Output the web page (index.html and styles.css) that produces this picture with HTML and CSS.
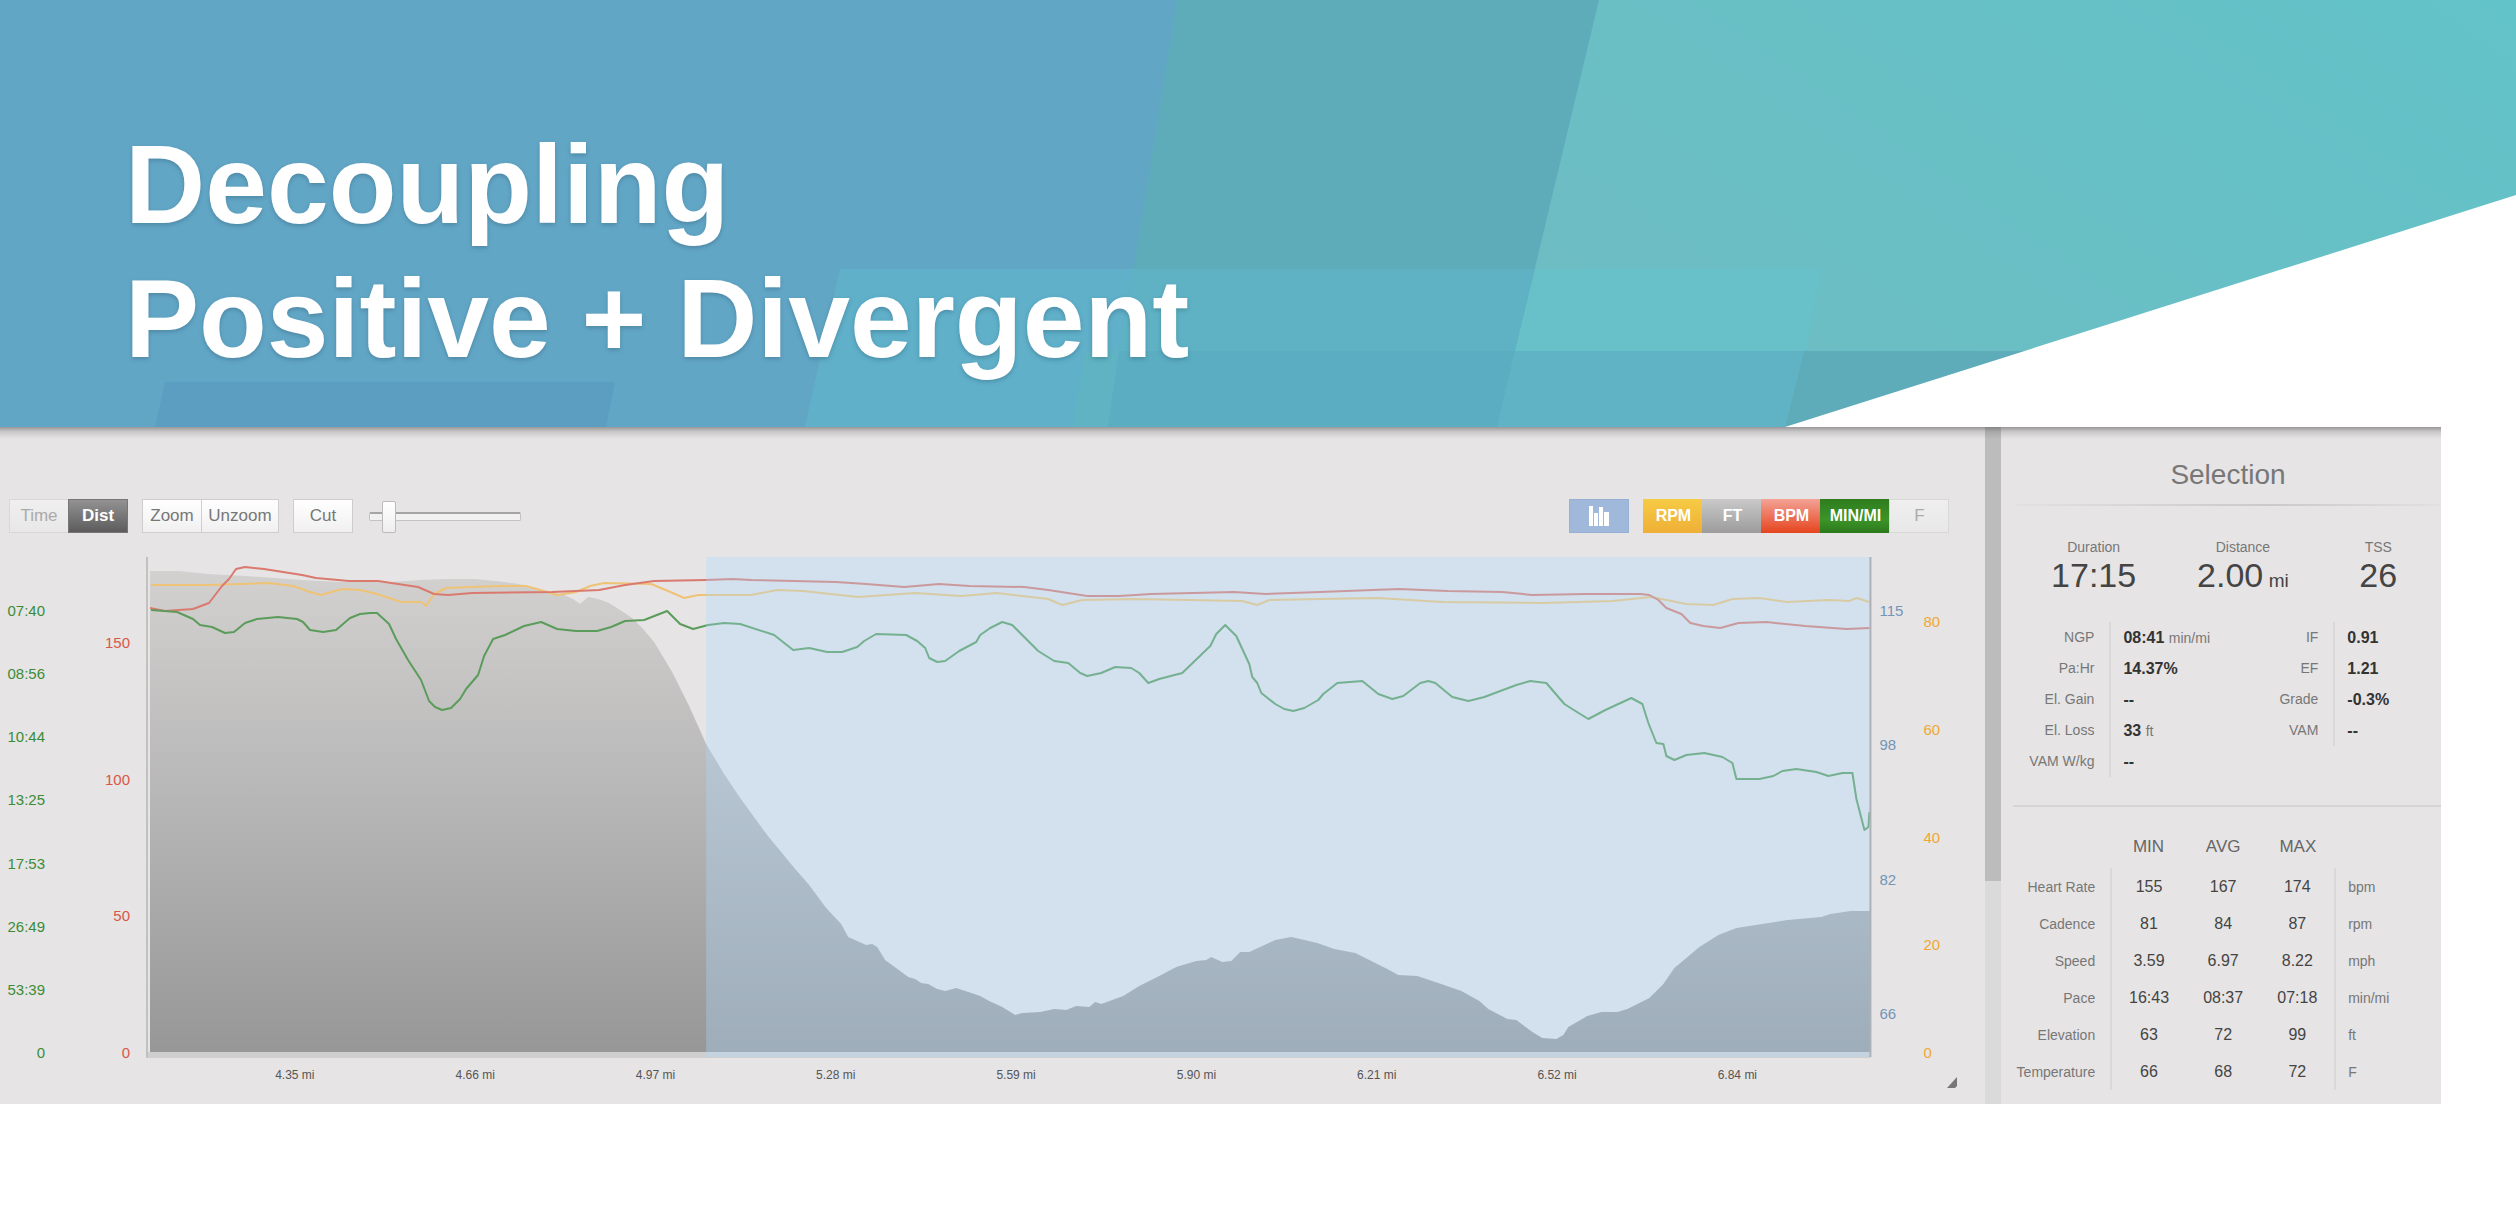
FILE: index.html
```html
<!DOCTYPE html>
<html lang="en">
<head>
<meta charset="utf-8">
<title>Decoupling: Positive + Divergent</title>
<link rel="stylesheet" href="styles.css">
</head>
<body>
<header class="banner">
  <svg class="banner-art" viewBox="0 0 2516 427" preserveAspectRatio="none" aria-hidden="true">
    <defs>
      <linearGradient id="teal" x1="0" y1="0.6" x2="1" y2="0">
        <stop offset="0" stop-color="#6dbdc3"/>
        <stop offset="1" stop-color="#62c3c8"/>
      </linearGradient>
    </defs>
    <rect width="2516" height="427" fill="#62a6c6"/>
    <path d="M165 382H615L606 427H155Z" fill="#5c9ec1"/>
    <path d="M1177 0H1599L1497 427H1108Z" fill="#5eacba"/>
    <path d="M1599 0H2516V427H1497Z" fill="url(#teal)"/>
    <path d="M840 269H1132L1108 427H805Z" fill="#60b0ca"/>
    <path d="M1085 351H1119L1108 427H1072Z" fill="#5fb3c2"/>
    <path d="M1132 269H1535L1515 351H1119Z" fill="#5fb2c4"/>
    <path d="M1119 351H1515L1497 427H1108Z" fill="#5badc2"/>
    <path d="M1535 269H1822L1806 351H1515Z" fill="#68c0c9"/>
    <path d="M1515 351H1804L1785 427H1497Z" fill="#60b3c4"/>
    <path d="M1804 351H2030V427H1785Z" fill="#5eabb9"/>
    <path d="M2516 195V427H1785Z" fill="#fff"/>
  </svg>
  <h1 class="title">Decoupling<br>Positive + Divergent</h1>
</header>

<main class="panel">
  <section class="chart">
    <div class="toolbar">
      <div class="group">
        <button class="btn faded" type="button">Time</button>
        <button class="btn active" type="button">Dist</button>
      </div>
      <div class="group">
        <button class="btn" type="button">Zoom</button>
        <button class="btn wide" type="button">Unzoom</button>
      </div>
      <button class="btn" type="button">Cut</button>
      <input class="slider" type="range" min="0" max="100" value="9" aria-label="Smoothing">
      <button class="btn bars" type="button" aria-label="Histogram">
        <svg width="22" height="20" viewBox="0 0 22 20" aria-hidden="true"><path d="M1 0h4v20H1zM6 7h4v13H6zM11 1h4v19h-4zM16 6h5v14h-5z" fill="#fff"/></svg>
      </button>
      <div class="group">
        <button class="btn tone rpm" type="button">RPM</button>
        <button class="btn tone ft" type="button">FT</button>
        <button class="btn tone bpm" type="button">BPM</button>
        <button class="btn tone pace" type="button">MIN/MI</button>
        <button class="btn faded" type="button">F</button>
      </div>
    </div>

    <div class="graph">
      <div class="axis axis-pace"><span>07:40</span><span>08:56</span><span>10:44</span><span>13:25</span><span>17:53</span><span>26:49</span><span>53:39</span><span>0</span></div>
      <div class="axis axis-bpm"><span>150</span><span>100</span><span>50</span><span>0</span></div>
      <svg class="plot" viewBox="146 556 1726 502" preserveAspectRatio="none" role="img" aria-label="Pace, heart rate, cadence and elevation by distance">
        <defs>
          <linearGradient id="ground" gradientUnits="userSpaceOnUse" x1="0" y1="571" x2="0" y2="1052">
            <stop offset="0" stop-color="#d2d1d0"/>
            <stop offset="0.5" stop-color="#b6b5b5"/>
            <stop offset="1" stop-color="#989797"/>
          </linearGradient>
        </defs>
        <path d="M146 1052H1870V1058H146Z" fill="#d0cfcf"/>
        <path d="M147 557V1058" stroke="#c2c1c1" stroke-width="2"/>
        <path fill="url(#ground)" d="M150 1052V571L179 571 208 574 245 576 274 578 302 580 340 582 392 582 420 580 448 579 475 579 496 581 519 584 543 590 564 595 573 599 580 604 588 597 598 599 609 603 620 610 632 618 643 629 654 642 672 672 689 706 706 744 724 774 740 798 767 835 795 869 809 885 826 908 841 924 848 937 866 945 872 944 877 947 885 960 908 977 915 979 921 983 928 984 937 989 945 991 956 988 980 996 989 1001 1002 1007 1015 1015 1022 1013 1040 1012 1054 1009 1066 1010 1076 1006 1089 1007 1095 1002 1101 1004 1123 996 1139 986 1159 976 1176 967 1196 961 1206 960 1211 957 1222 962 1231 961 1240 952 1249 952 1275 940 1291 937 1300 939 1317 943 1334 949 1355 953 1385 968 1398 975 1417 976 1438 983 1461 991 1479 1001 1488 1009 1507 1019 1516 1020 1532 1032 1542 1038 1556 1039 1563 1035 1568 1027 1587 1016 1601 1012 1617 1012 1627 1009 1649 998 1663 984 1674 968 1699 947 1718 935 1736 928 1787 920 1821 917 1830 914 1850 911 1870 911V1052Z"/>
        <g class="series">
          <polyline stroke="#efc376" points="151,585 208,585 269,583 293,586 310,592 321,595 342,589 360,590 377,594 401,602 421,602 426,606 434,594 446,588 472,587 500,586 526,586 540,590 557,595 576,592 590,586 604,583 651,584 668,591 684,598 698,595 751,595 777,590 803,591 858,597 915,593 961,596 997,593 1048,599 1062,605 1082,600 1135,599 1242,601 1257,605 1269,600 1320,599 1378,598 1442,602 1543,603 1612,601 1651,597 1686,604 1713,605 1732,599 1759,598 1787,602 1828,600 1849,601 1856,598 1869,602"/>
          <polyline stroke="#da7a6e" points="150,608 165,611 193,609 209,603 222,586 229,579 236,569 245,567 264,569 302,575 316,578 349,581 378,581 418,587 434,594 448,595 472,593 552,592 599,590 625,585 654,581 706,580 732,579 751,580 836,582 866,584 904,587 939,584 969,586 1024,587 1048,590 1087,596 1119,596 1151,594 1234,592 1265,594 1320,592 1346,591 1399,589 1447,591 1502,592 1532,595 1585,594 1640,594 1649,595 1658,600 1666,608 1681,614 1690,623 1703,626 1720,628 1738,623 1766,622 1805,626 1846,629 1869,628"/>
          <polyline stroke="#5b9c5b" points="151,610 177,612 193,619 200,625 212,627 225,633 234,632 245,623 257,619 278,617 297,619 303,622 310,630 323,632 336,630 350,618 360,614 370,613 377,613 389,624 396,639 408,660 421,680 429,701 435,707 442,710 451,708 460,699 466,689 478,675 484,656 493,639 505,635 524,626 541,622 557,629 576,631 597,631 611,627 625,621 644,620 667,611 680,624 693,629 708,625 724,623 740,624 774,635 793,650 809,648 827,652 842,652 857,647 864,641 876,634 906,635 917,641 925,648 929,658 937,662 945,661 959,651 976,642 980,635 990,628 1002,622 1012,625 1038,651 1054,661 1068,663 1080,673 1087,676 1101,673 1115,667 1131,668 1139,673 1148,683 1159,679 1182,673 1210,646 1216,634 1225,625 1236,636 1249,664 1252,677 1257,683 1261,693 1275,704 1284,709 1293,711 1304,708 1318,700 1323,694 1337,683 1362,681 1378,694 1392,699 1403,696 1420,683 1428,681 1435,683 1452,697 1468,701 1484,697 1516,685 1530,681 1546,683 1564,704 1575,711 1588,719 1605,710 1631,698 1642,704 1648,723 1656,743 1663,744 1666,756 1674,760 1686,755 1704,753 1722,757 1732,763 1736,779 1759,779 1773,776 1782,771 1796,769 1816,772 1828,776 1842,773 1852,773 1856,799 1864,830 1868,827 1869,812"/>
        </g>
        <rect x="706" y="557" width="1164" height="500" fill="#aadaff" fill-opacity="0.33"/>
        <path d="M1870 557V1057" stroke="#adb1b7" stroke-width="2"/>
      </svg>
      <div class="axis axis-elev"><span>115</span><span>98</span><span>82</span><span>66</span></div>
      <div class="axis axis-cad"><span>80</span><span>60</span><span>40</span><span>20</span><span>0</span></div>
      <div class="axis-dist"><span>4.35 mi</span><span>4.66 mi</span><span>4.97 mi</span><span>5.28 mi</span><span>5.59 mi</span><span>5.90 mi</span><span>6.21 mi</span><span>6.52 mi</span><span>6.84 mi</span></div>
      <svg class="grip" width="11" height="12" viewBox="0 0 11 12" aria-hidden="true"><path d="M0 11L10 0V9L8 11Z" fill="#777"/></svg>
    </div>
  </section>

  <div class="scrollbar"><div class="thumb"></div></div>

  <aside class="side">
    <h2 class="side-title">Selection</h2>
    <dl class="totals">
      <div><dt>Duration</dt><dd>17:15</dd></div>
      <div><dt>Distance</dt><dd>2.00 <small>mi</small></dd></div>
      <div><dt>TSS</dt><dd>26</dd></div>
    </dl>
    <div class="details">
      <dl class="facts">
        <dt>NGP</dt><dd>08:41 <small>min/mi</small></dd>
        <dt>Pa:Hr</dt><dd>14.37%</dd>
        <dt>El. Gain</dt><dd>--</dd>
        <dt>El. Loss</dt><dd>33 <small>ft</small></dd>
        <dt>VAM W/kg</dt><dd>--</dd>
      </dl>
      <dl class="facts">
        <dt>IF</dt><dd>0.91</dd>
        <dt>EF</dt><dd>1.21</dd>
        <dt>Grade</dt><dd>-0.3%</dd>
        <dt>VAM</dt><dd>--</dd>
      </dl>
    </div>
    <table class="ranges">
      <thead><tr><td></td><th scope="col">MIN</th><th scope="col">AVG</th><th scope="col">MAX</th><td></td></tr></thead>
      <tbody>
        <tr><th scope="row">Heart Rate</th><td>155</td><td>167</td><td>174</td><td>bpm</td></tr>
        <tr><th scope="row">Cadence</th><td>81</td><td>84</td><td>87</td><td>rpm</td></tr>
        <tr><th scope="row">Speed</th><td>3.59</td><td>6.97</td><td>8.22</td><td>mph</td></tr>
        <tr><th scope="row">Pace</th><td>16:43</td><td>08:37</td><td>07:18</td><td>min/mi</td></tr>
        <tr><th scope="row">Elevation</th><td>63</td><td>72</td><td>99</td><td>ft</td></tr>
        <tr><th scope="row">Temperature</th><td>66</td><td>68</td><td>72</td><td>F</td></tr>
      </tbody>
    </table>
  </aside>
</main>
</body>
</html>
```

FILE: styles.css
```css
* { box-sizing: border-box; }

body {
  margin: 0;
  background: #fff;
  color: #555;
  font-family: "Liberation Sans", Arial, sans-serif;
  font-size: 14px;
  line-height: 20px;
}

dl, dd, h1, h2 { margin: 0; }

/* Banner */
.banner {
  position: relative;
  padding: 118px 24px 41px 125px;
}
.banner-art {
  position: absolute;
  inset: 0;
  width: 100%;
  height: 100%;
}
.title {
  position: relative;
  color: #fff;
  font-size: 111px;
  font-weight: bold;
  line-height: 134px;
  text-shadow: 0 2px 4px rgba(40, 80, 100, 0.35);
}

/* Panel */
.panel {
  position: relative;
  display: grid;
  grid-template-columns: 1985fr 16px 439fr;
  margin-right: 3%;
  background: #e6e4e5;
}
.panel::before {
  content: "";
  position: absolute;
  inset: 0 0 auto;
  height: 12px;
  background: linear-gradient(rgba(90, 88, 88, 0.55), rgba(90, 88, 88, 0.2) 40%, rgba(90, 88, 88, 0));
}
.chart { min-width: 0; padding: 72px 0 15px; }

.toolbar {
  display: flex;
  align-items: center;
  gap: 14px;
  margin: 0 36px 23px 9px;
}
.group { display: flex; }
.btn {
  width: 60px;
  height: 34px;
  padding: 0;
  border: 1px solid #cfcecf;
  background: linear-gradient(#fff, #f1f0f0);
  color: #777;
  font-family: inherit;
  font-size: 17px;
  line-height: 32px;
}
.group .btn + .btn { margin-left: -1px; }
.group .wide { width: 78px; }
.faded { border-color: #d9d8d8; background: linear-gradient(#f0efef, #e9e8e8); color: #aaa; }
.active { border-color: #777; background: linear-gradient(#929292, #5c5c5c); color: #fff; font-weight: bold; }
.tone { border-color: transparent; background-origin: border-box; color: #fff; font-size: 16px; font-weight: bold; }
.rpm { background-image: linear-gradient(#f6cb45, #efaf36); }
.ft { background-image: linear-gradient(#c9c9c9, #9c9c9c); }
.bpm { background-image: linear-gradient(#f4a296, #e4451e); }
.pace { width: 70px; background-image: linear-gradient(#2f7c1f, #3c9428 60%, #2c7a1c); }
.bars { display: flex; align-items: center; justify-content: center; margin-left: auto; border-color: #97b1d4; background: #a0b8d9; }

.slider {
  width: 152px;
  height: 34px;
  margin: 0 0 0 2px;
  appearance: none;
  background: none;
}
.slider::-webkit-slider-runnable-track {
  height: 9px;
  border: 1px solid #c4c3c3;
  border-top: 2px solid #a5a4a4;
  border-radius: 2px;
  background: #f2f1f1;
}
.slider::-webkit-slider-thumb {
  appearance: none;
  width: 14px;
  height: 32px;
  margin-top: -13px;
  border: 1px solid #bbb;
  border-radius: 2px;
  background: linear-gradient(#fff, #eee);
}

/* Graph */
.graph {
  display: grid;
  grid-template-columns: 45px 85px 16px 1fr 7px 44px 62px;
}
.plot { grid-column: 4; display: block; width: 100%; height: 502px; }
.series { fill: none; stroke-width: 2; stroke-linejoin: round; }
.axis {
  display: flex;
  flex-direction: column;
  justify-content: space-between;
  margin-bottom: -5px;
  font-size: 15px;
}
.axis-pace { padding-top: 45px; align-items: flex-end; color: #3c8c35; }
.axis-bpm { padding-top: 77px; align-items: flex-end; color: #d95748; }
.axis-elev { grid-column: 6; padding: 45px 0 39px; color: #7295b8; }
.axis-cad { padding-top: 56px; color: #f0a833; }
.axis-dist {
  grid-column: 4;
  display: grid;
  grid-template-columns: repeat(9, 1fr);
  padding: 7px 2.6% 0 3.4%;
  font-size: 12px;
  text-align: center;
}
.grip { grid-column: 7; margin: 19px 0 0 24px; }

.scrollbar { background: #dbdada; }
.thumb { height: 67%; background: #bdbcbc; }

/* Selection */
.side { padding-top: 28px; }
.side-title {
  margin-left: 14px;
  padding-bottom: 9px;
  border-bottom: 2px solid;
  border-image: linear-gradient(90deg, #e2e0e1, #cbcaca 60%, #e2e0e1) 1;
  color: #777;
  font-size: 28px;
  font-weight: normal;
  line-height: 40px;
  text-align: center;
}
.totals {
  display: grid;
  grid-template-columns: 42% 26% 1fr;
  padding: 31px 0 23px;
  text-align: center;
}
.totals div:last-child { padding-left: 16px; }
.totals dt { color: #777; }
.totals dd { color: #444; font-size: 34px; line-height: 36px; }
.totals small { margin-left: -4px; font-size: 19px; }
.details {
  display: grid;
  grid-template-columns: 51% 49%;
  align-items: start;
  padding-bottom: 30px;
  background: linear-gradient(#d6d5d5, #d6d5d5) 12px 100% / 100% 2px no-repeat;
}
.facts {
  display: grid;
  grid-template-columns: 110px 1fr;
  line-height: 31px;
}
.facts dt { padding-right: 15px; border-right: 2px solid #dad9d9; color: #777; text-align: right; }
.facts dd { height: 31px; padding-left: 12px; color: #333; font-size: 16px; font-weight: bold; }
.facts small { color: #777; font-size: 14px; font-weight: normal; }

.ranges {
  width: 100%;
  margin-top: 18px;
  border-collapse: collapse;
  table-layout: fixed;
}
.ranges td, .ranges th { height: 37px; padding: 0; color: #444; font-size: 16px; font-weight: normal; text-align: center; }
.ranges thead th { height: 43px; color: #666; font-size: 17px; }
.ranges tr > :first-child { width: 25%; padding-right: 15px; text-align: right; font-size: 14px; color: #777; }
.ranges tr > :last-child { width: 24%; padding-left: 12px; text-align: left; font-size: 14px; color: #777; }
.ranges tbody tr > :first-child { border-right: 2px solid #dad9d9; }
.ranges tbody tr > :last-child { border-left: 2px solid #dad9d9; }
```
